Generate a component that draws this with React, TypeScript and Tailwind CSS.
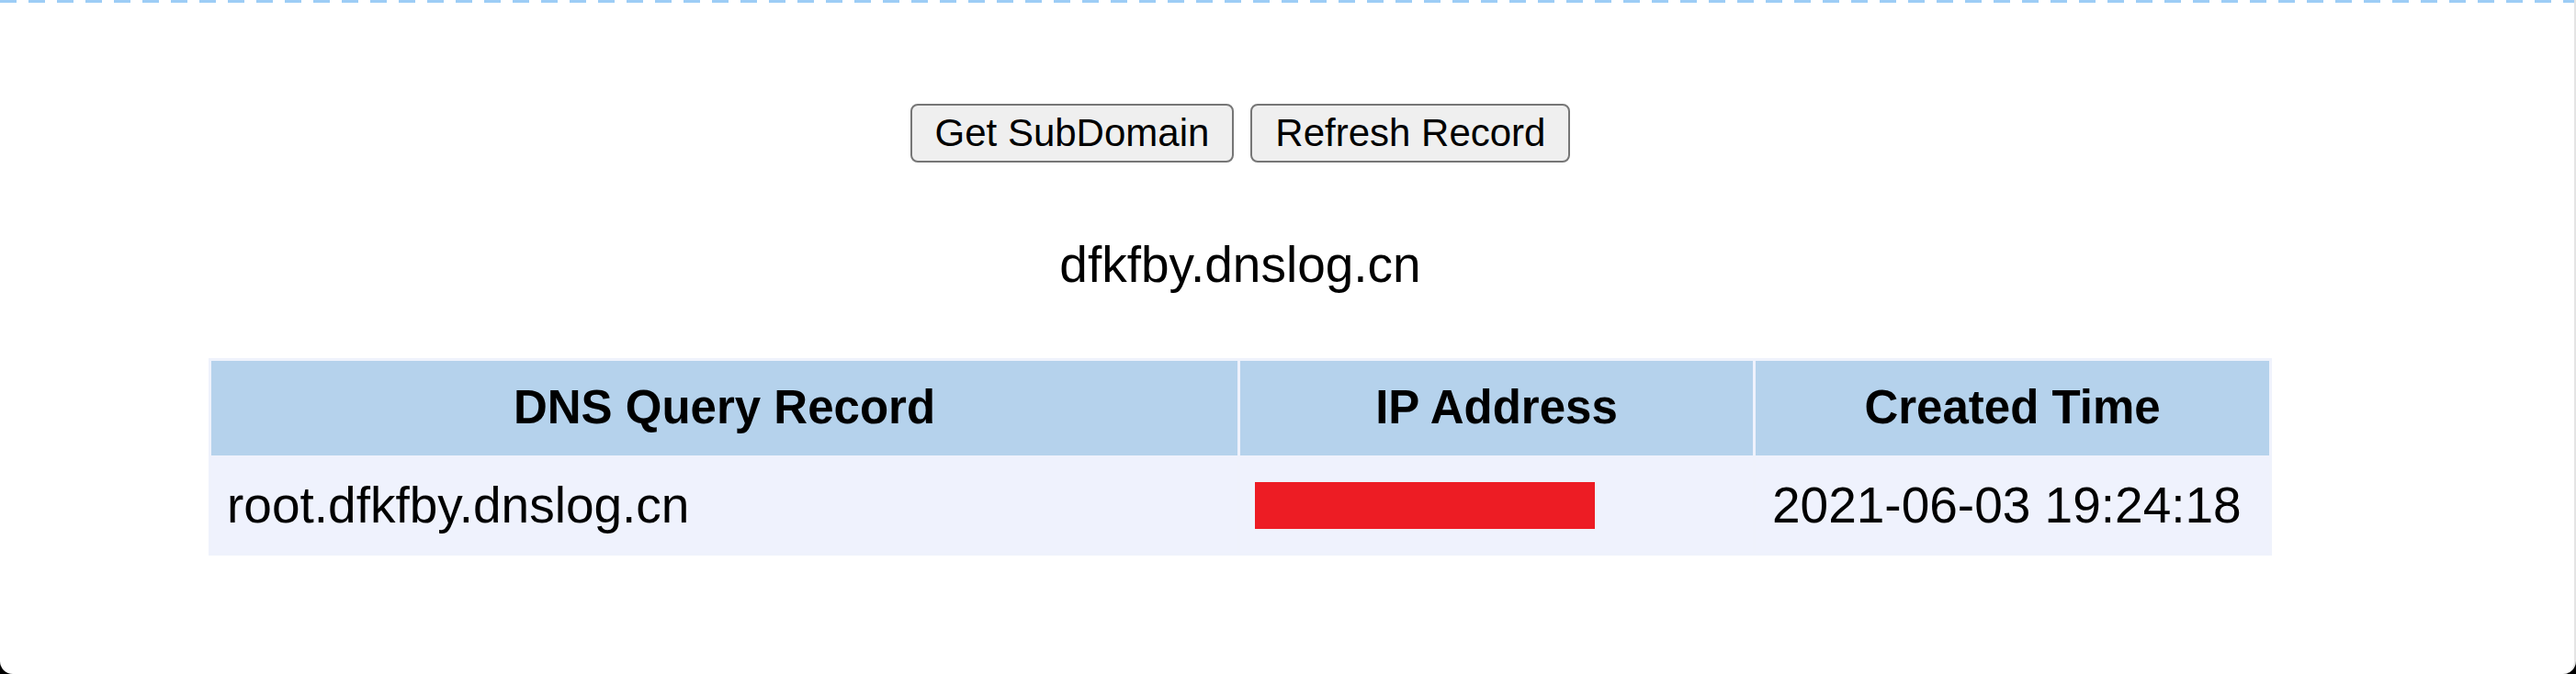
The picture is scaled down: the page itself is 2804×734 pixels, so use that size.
import React from 'react';

const records = [
  { domain: 'root.dfkfby.dnslog.cn', ip: '', time: '2021-06-03 19:24:18' },
];

export default function App() {
  return (
    <div className="w-[2804px] h-[734px] bg-black overflow-hidden font-['Liberation_Sans',Arial,sans-serif] text-black">
      <div className="h-full bg-white rounded-b-[14px] border-r-2 border-[#e4e4e4] flex flex-col">
        {/* dashed top rule */}
        <div className="h-[3px] shrink-0 bg-[repeating-linear-gradient(90deg,#9dcdf6_0px,#9dcdf6_18px,transparent_18px,transparent_31px)]" />

        <div className="w-[2700px] flex flex-col items-center">
          <div className="mt-[110px] flex gap-[18px]">
            <button className="h-[64px] px-[25px] bg-[#efefef] border-2 border-[#767676] rounded-[8px] text-[42px] leading-none text-black">
              Get SubDomain
            </button>
            <button className="h-[64px] px-[25px] bg-[#efefef] border-2 border-[#767676] rounded-[8px] text-[42px] leading-none text-black">
              Refresh Record
            </button>
          </div>

          <div className="mt-[80px] text-[55px] leading-[62px]">dfkfby.dnslog.cn</div>

          <table className="mt-[71px] w-[2246px] border-separate border-spacing-[3px] bg-[#eff2fc] table-fixed">
            <thead>
              <tr className="bg-[#b5d2ec]">
                <th className="w-[1117px] h-[103px] text-[51px] font-bold text-center">DNS Query Record</th>
                <th className="w-[558px] h-[103px] text-[51px] font-bold text-center">IP Address</th>
                <th className="h-[103px] text-[51px] font-bold text-center">Created Time</th>
              </tr>
            </thead>
            <tbody>
              {records.map((r) => (
                <tr key={r.domain} className="bg-[#eff2fd]">
                  <td className="h-[103px] pl-[17px] text-[55px] text-left">{r.domain}</td>
                  <td className="h-[103px] pl-[16px] text-left">
                    <span className="block w-[370px] h-[51px] bg-[#ed1c24]" />
                  </td>
                  <td className="h-[103px] pl-[18px] text-[55px] text-left">{r.time}</td>
                </tr>
              ))}
            </tbody>
          </table>
        </div>
      </div>
    </div>
  );
}
